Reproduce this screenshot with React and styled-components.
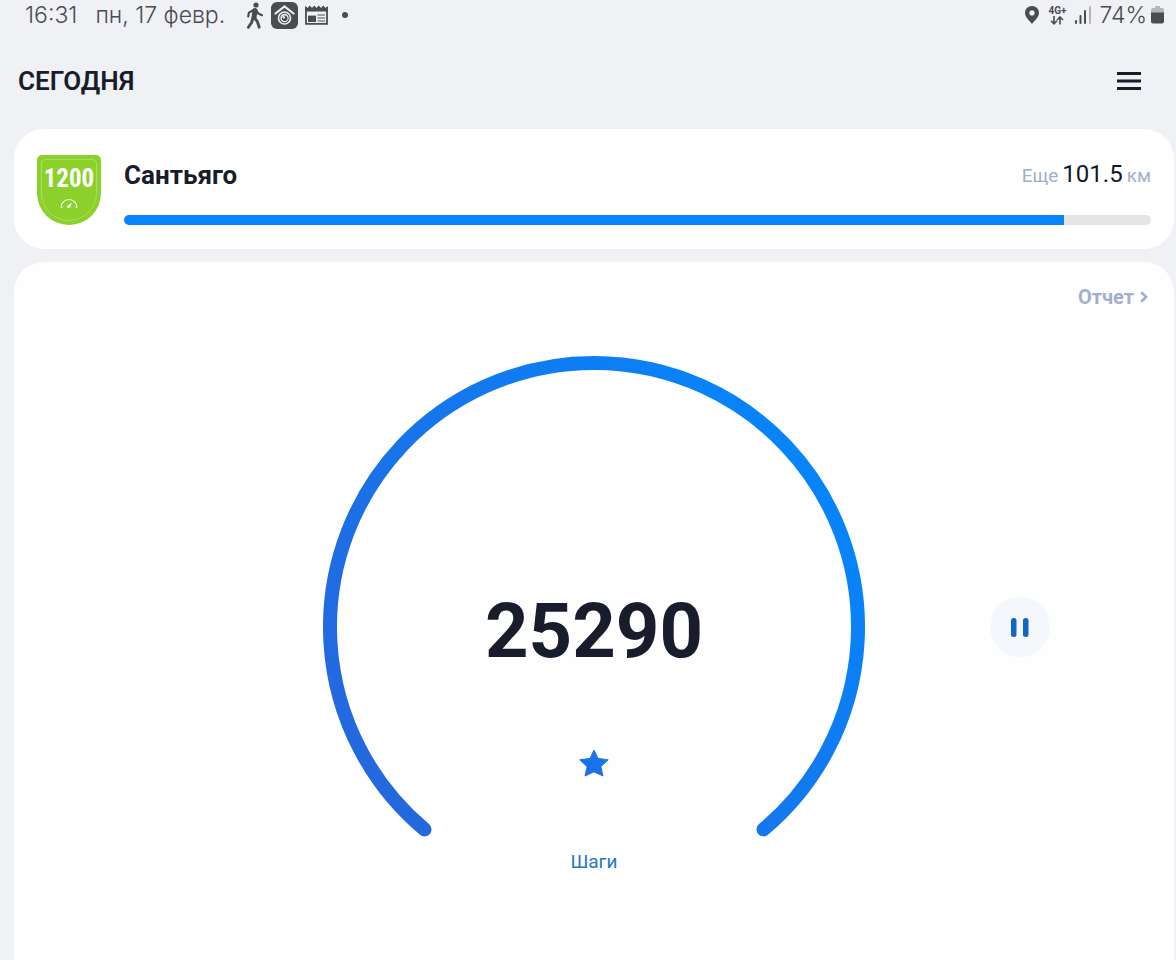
import React from 'react';
import styled, { createGlobalStyle } from 'styled-components';

const GlobalStyle = createGlobalStyle`
  * {
    box-sizing: border-box;
  }
  body {
    margin: 0;
    background: #eff1f5;
    color: #181c2b;
    font-family: Roboto, "Liberation Sans", sans-serif;
  }
`;

const Page = styled.div`
  min-height: 100vh;
  display: flex;
  flex-direction: column;
`;

const StatusBar = styled.div`
  height: 30px;
  padding: 0 12px 0 25px;
  display: flex;
  align-items: center;
  justify-content: space-between;
  color: #4b4c50;
  font-family: Inter, sans-serif;
  font-size: 23px;
  font-weight: 300;
  line-height: 30px;
`;

const StatusGroup = styled.div`
  display: flex;
  align-items: center;
  gap: ${props => props.$gap};
`;

const StatusIcons = styled.div`
  display: flex;
  align-items: center;
  gap: 7px;
  margin-left: 3px;
`;

const Network = styled.div`
  display: flex;
  flex-direction: column;
  align-items: center;
  font-family: Roboto, sans-serif;
  font-size: 10px;
  font-weight: 700;
  line-height: 10px;
`;

const Header = styled.header`
  height: 99px;
  padding: 3px 32px 0 18px;
  display: flex;
  align-items: center;
  justify-content: space-between;
`;

const Title = styled.h1`
  margin: 0;
  font-size: 26px;
  font-weight: 600;
  line-height: 32px;
`;

const MenuButton = styled.button`
  width: 30px;
  height: 30px;
  padding: 0;
  border: 0;
  background: none;
  color: inherit;
  display: grid;
  place-items: center;
`;

const Main = styled.main`
  flex: 1;
  padding: 0 2px 0 14px;
  display: flex;
  flex-direction: column;
  gap: 13px;
`;

const Challenge = styled.section`
  padding: 26px 23px 24px;
  border-radius: 30px;
  background: #fff;
  display: flex;
  align-items: center;
  gap: 23px;
`;

const Badge = styled.div`
  width: 64px;
  height: 70px;
  padding: 4px;
  border-radius: 5px 5px 32px 32px;
  background: #8bd02b;
`;

const BadgeInner = styled.div`
  height: 100%;
  border: 1px solid #a9e05a;
  border-radius: 4px 4px 28px 28px;
  color: #fff;
  display: flex;
  flex-direction: column;
  align-items: center;
  font-family: "Liberation Sans Narrow", "Roboto Condensed", Roboto, sans-serif;
  font-size: 25px;
  font-weight: 700;
  line-height: 38px;
`;

const ChallengeBody = styled.div`
  flex: 1;
  padding-top: 4px;
`;

const ChallengeRow = styled.div`
  height: 32px;
  display: flex;
  align-items: center;
  justify-content: space-between;
  margin-bottom: 24px;
`;

const ChallengeName = styled.h2`
  margin: 0;
  font-size: 26px;
  font-weight: 700;
  line-height: 32px;
`;

const Distance = styled.div`
  display: flex;
  align-items: baseline;
  gap: 4px;
  color: #a3afca;
  font-size: 19px;
  line-height: 32px;
`;

const Kilometers = styled.span`
  color: #101828;
  font-size: 24px;
`;

const Track = styled.div`
  height: 10px;
  border-radius: 5px;
  overflow: hidden;
  background: #e3e5e7;
`;

const Fill = styled.div`
  height: 100%;
  background: #0a84fb;
`;

const Steps = styled.section`
  flex: 1;
  padding-top: 23px;
  border-radius: 30px 30px 0 0;
  background: #fefefe;
  display: flex;
  flex-direction: column;
`;

const ReportLink = styled.a`
  align-self: flex-end;
  margin: 0 26px 47px 0;
  color: #a3afca;
  font-size: 20px;
  font-weight: 700;
  line-height: 24px;
  text-decoration: none;
  display: flex;
  align-items: center;
  gap: 6px;
`;

const Dashboard = styled.div`
  display: grid;
  grid-template-columns: 1fr auto 1fr;
  align-items: center;
  justify-items: center;
`;

const Dial = styled.div`
  grid-column: 2;
  display: grid;

  > * {
    grid-area: 1 / 1;
  }
`;

const DialContent = styled.div`
  align-self: end;
  padding-bottom: 24px;
  display: flex;
  flex-direction: column;
  align-items: center;
`;

const StepCount = styled.div`
  font-size: 76px;
  font-weight: 700;
  line-height: 88px;
  margin-bottom: 74px;
`;

const StepLabel = styled.div`
  margin-top: 73px;
  color: #2279c2;
  font-size: 19px;
  line-height: 24px;
`;

const PauseButton = styled.button`
  width: 60px;
  height: 60px;
  padding: 0;
  border: 0;
  border-radius: 50%;
  background: #f4f8fd;
  display: grid;
  place-items: center;
`;

const WalkIcon = () => (
  <svg width="18" height="28" viewBox="0 0 18 28" fill="none" stroke="currentColor" strokeLinecap="round" strokeLinejoin="round">
    <circle cx="10" cy="4" r="2.6" fill="currentColor" stroke="none" />
    <path d="M9 9.4 L8 16.5" strokeWidth="5" />
    <path d="M7.5 9 L3 11.6 L2.2 15.4" strokeWidth="2.2" />
    <path d="M10.4 9.5 L12.3 12.6 L16 14.2" strokeWidth="2.2" />
    <path d="M7 17 L5.6 21.5 L2.4 26.2" strokeWidth="2.9" />
    <path d="M8.6 17 L11.4 20.6 L13.2 26.2" strokeWidth="2.9" />
  </svg>
);

const HomeCamIcon = () => (
  <svg width="27" height="27" viewBox="0 0 27 27">
    <rect width="27" height="27" rx="6" fill="#4b4c50" />
    <path d="M4.5 11.5 L13.5 4.5 L22.5 11.5" fill="none" stroke="#eff1f5" strokeWidth="2.2" strokeLinecap="round" />
    <circle cx="13.5" cy="16" r="6" fill="none" stroke="#eff1f5" strokeWidth="1.6" />
    <circle cx="13.5" cy="16" r="4.2" fill="#eff1f5" />
    <circle cx="13.7" cy="16.2" r="2.8" fill="#4b4c50" />
    <circle cx="12.8" cy="15.2" r="1.2" fill="#eff1f5" />
  </svg>
);

const NewsIcon = () => (
  <svg width="23" height="22" viewBox="0 0 23 22" fill="none" stroke="currentColor" strokeWidth="1.8">
    <path d="M1 3 V19.8 H22 V3" />
    <path d="M0.2 2 L2.5 4 L4.8 1.4 L7 4 L9.3 1.4 L11.5 4 L13.7 1.4 L16 4 L18.2 1.4 L20.5 4 L22.8 2 V7.6 H0.2 Z" fill="currentColor" stroke="none" />
    <path d="M12.5 11 H20 M12.5 14 H20 M12.5 17 H20" strokeWidth="1" />
    <rect x="3" y="11.6" width="8" height="6.4" fill="currentColor" stroke="none" />
  </svg>
);

const DotIcon = () => (
  <svg width="20" height="6" viewBox="0 0 20 6">
    <circle cx="10" cy="3" r="3" fill="currentColor" />
  </svg>
);

const PinIcon = () => (
  <svg width="14" height="18" viewBox="0 0 14 18">
    <path fillRule="evenodd" fill="currentColor" d="M7 0 C3 0 0 3 0 6.8 C0 11 4 14.3 7 18 C10 14.3 14 11 14 6.8 C14 3 11 0 7 0 Z M7 4.3 A2.6 2.6 0 1 1 7 9.5 A2.6 2.6 0 1 1 7 4.3 Z" />
  </svg>
);

const ArrowsIcon = () => (
  <svg width="14" height="9" viewBox="0 0 14 9" fill="none" stroke="currentColor" strokeWidth="1.6">
    <path d="M4 0 V7.5 M1 4.8 L4 7.8 L7 4.8" />
    <path d="M10 8.5 V1 M7 4 L10 1 L13 4" />
  </svg>
);

const SignalIcon = () => (
  <svg width="16" height="18" viewBox="0 0 16 18" fill="currentColor">
    <rect x="0" y="14" width="2" height="4" rx="1" />
    <rect x="4.5" y="9" width="2" height="9" rx="1" />
    <rect x="9" y="4" width="2" height="14" rx="1" />
    <rect x="14" y="0" width="2" height="18" rx="1" fill="#b5b6b9" />
  </svg>
);

const BatteryIcon = () => (
  <svg width="13" height="18" viewBox="0 0 13 18">
    <path d="M4 0 H9 V2 H11 Q13 2 13 4 V8 H0 V4 Q0 2 2 2 H4 Z" fill="#b5b6b9" />
    <path d="M0 6.5 H13 V15.5 Q13 17.5 11 17.5 H2 Q0 17.5 0 15.5 Z" fill="currentColor" />
  </svg>
);

const MenuIcon = () => (
  <svg width="24" height="18" viewBox="0 0 24 18" fill="currentColor">
    <rect width="24" height="3" />
    <rect y="7.5" width="24" height="3" />
    <rect y="15" width="24" height="3" />
  </svg>
);

const GaugeIcon = () => (
  <svg width="18" height="10" viewBox="0 0 18 10" fill="none" stroke="currentColor" strokeWidth="1.1">
    <path d="M1 9.5 A8 8 0 0 1 17 9.5" />
    <path d="M1 9.2 H2.6 M15.4 9.2 H17" />
    <path d="M12 4.8 L10.3 9 A1.6 1.6 0 1 1 8 7.2 Z" fill="currentColor" stroke="none" />
  </svg>
);

const ChevronIcon = () => (
  <svg width="8" height="12" viewBox="0 0 8 12" fill="none" stroke="currentColor" strokeWidth="2.6">
    <path d="M1.2 1.2 L6.2 6 L1.2 10.8" />
  </svg>
);

const DialArc = () => (
  <svg width="542" height="542" viewBox="0 0 542 542" fill="none">
    <defs>
      <linearGradient id="arc" gradientUnits="userSpaceOnUse" x1="70" y1="440" x2="520" y2="100">
        <stop offset="0" stopColor="#2468de" />
        <stop offset="1" stopColor="#0586fc" />
      </linearGradient>
    </defs>
    <path d="M101.5 473.4 A264 264 0 1 1 440.5 473.4" stroke="url(#arc)" strokeWidth="14" strokeLinecap="round" />
  </svg>
);

const StarIcon = () => (
  <svg width="30" height="28" viewBox="0 0 30 28">
    <defs>
      <linearGradient id="star" x1="0" y1="1" x2="1" y2="0">
        <stop offset="0" stopColor="#1f69df" />
        <stop offset="1" stopColor="#157bf3" />
      </linearGradient>
    </defs>
    <path
      d="M15 1 L19 9.4 L29.2 10.8 L21.9 17.6 L24 27 L15 22.8 L6 27 L8.1 17.6 L0.8 10.8 L11 9.4 Z"
      fill="url(#star)" stroke="url(#star)" strokeLinejoin="round"
    />
  </svg>
);

const PauseIcon = () => (
  <svg width="18" height="19" viewBox="0 0 18 19" fill="#1266c8">
    <rect x="0" width="5.5" height="19" rx="2.5" />
    <rect x="12" width="5.5" height="19" rx="2.5" />
  </svg>
);

const App = () => {
  const progress = 91.5;

  return (
    <Page>
      <GlobalStyle />
      <StatusBar>
        <StatusGroup $gap="18px">
          <span>16:31</span>
          <span>пн, 17 февр.</span>
          <StatusIcons>
            <WalkIcon />
            <HomeCamIcon />
            <NewsIcon />
            <DotIcon />
          </StatusIcons>
        </StatusGroup>
        <StatusGroup $gap="9px">
          <PinIcon />
          <Network>
            4G+
            <ArrowsIcon />
          </Network>
          <StatusGroup $gap="8px">
            <SignalIcon />
            <StatusGroup $gap="4px">
              <span>74%</span>
              <BatteryIcon />
            </StatusGroup>
          </StatusGroup>
        </StatusGroup>
      </StatusBar>

      <Header>
        <Title>СЕГОДНЯ</Title>
        <MenuButton type="button" aria-label="Меню">
          <MenuIcon />
        </MenuButton>
      </Header>

      <Main>
        <Challenge>
          <Badge>
            <BadgeInner>
              1200
              <GaugeIcon />
            </BadgeInner>
          </Badge>
          <ChallengeBody>
            <ChallengeRow>
              <ChallengeName>Сантьяго</ChallengeName>
              <Distance>
                <span>Еще</span>
                <Kilometers>101.5</Kilometers>
                <span>км</span>
              </Distance>
            </ChallengeRow>
            <Track role="progressbar" aria-label="Сантьяго" aria-valuenow={progress} aria-valuemin={0} aria-valuemax={100}>
              <Fill style={{width: `${progress}%`}} />
            </Track>
          </ChallengeBody>
        </Challenge>

        <Steps>
          <ReportLink href="#report">
            Отчет
            <ChevronIcon />
          </ReportLink>
          <Dashboard>
            <Dial>
              <DialArc />
              <DialContent>
                <StepCount>25290</StepCount>
                <StarIcon />
                <StepLabel>Шаги</StepLabel>
              </DialContent>
            </Dial>
            <PauseButton type="button" aria-label="Пауза">
              <PauseIcon />
            </PauseButton>
          </Dashboard>
        </Steps>
      </Main>
    </Page>
  )
}

export default App
